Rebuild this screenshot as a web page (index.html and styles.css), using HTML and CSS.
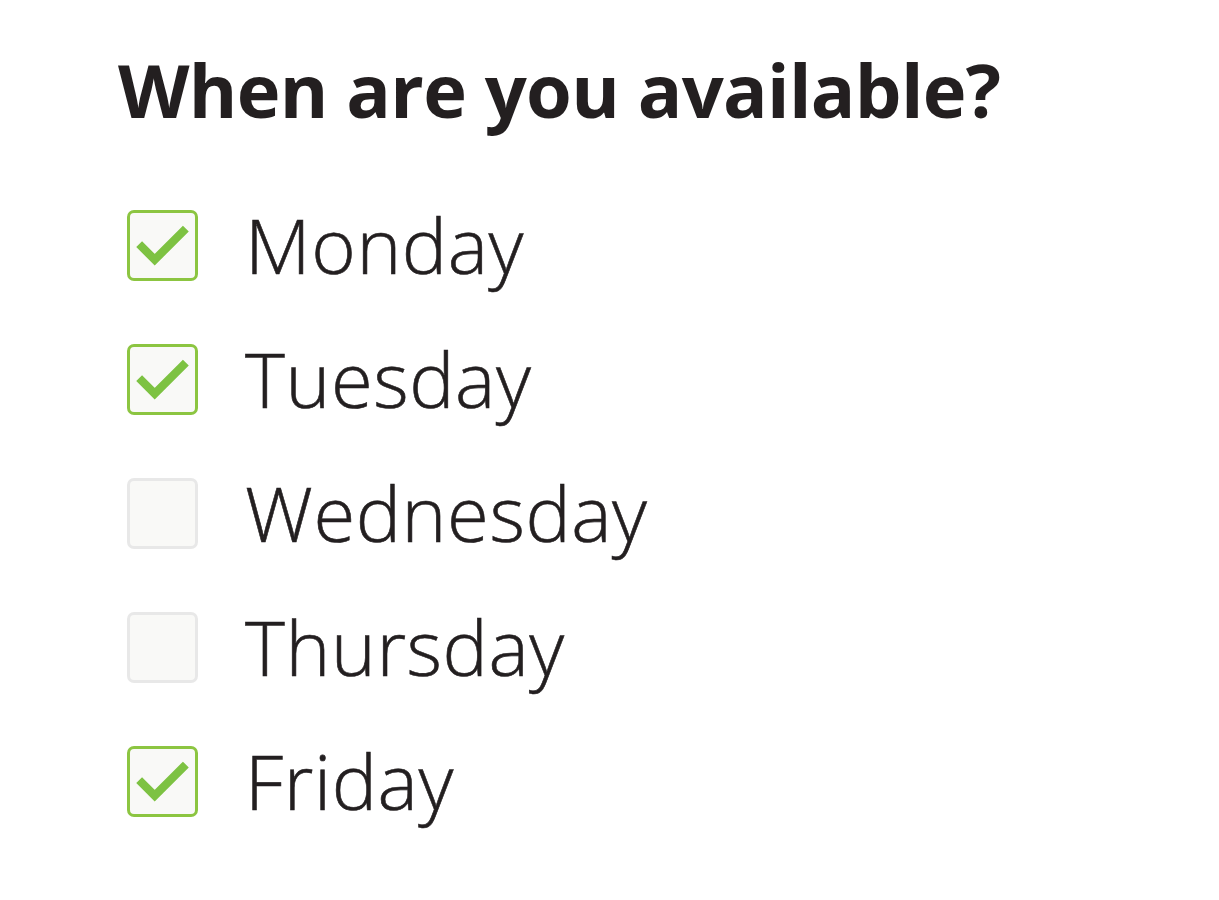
FILE: index.html
```html
<!DOCTYPE html>
<html>
<head>
<meta charset="utf-8">
<link rel="stylesheet" href="styles.css">
</head>
<body>
<main class="page">
  <h1 class="title">When are you available?</h1>
  <ul class="days">
    <li class="day"><span class="box checked"><svg viewBox="0 0 71 71" class="tick"><path d="M10 34 L27 51 L61 17"/></svg></span><span class="label">Monday</span></li>
    <li class="day"><span class="box checked"><svg viewBox="0 0 71 71" class="tick"><path d="M10 34 L27 51 L61 17"/></svg></span><span class="label">Tuesday</span></li>
    <li class="day"><span class="box"></span><span class="label">Wednesday</span></li>
    <li class="day"><span class="box"></span><span class="label">Thursday</span></li>
    <li class="day"><span class="box checked"><svg viewBox="0 0 71 71" class="tick"><path d="M10 34 L27 51 L61 17"/></svg></span><span class="label">Friday</span></li>
  </ul>
</main>
</body>
</html>
```
FILE: styles.css
```css
html, body { margin: 0; padding: 0; background: #fff; }
body { color: #231f20; font-family: "Open Sans", "Noto Sans", sans-serif; min-height: 900px; }
.page { padding: 40px 0 60px 118px; }
.title { margin: 0; font-size: 74px; font-weight: 700; line-height: 100px; letter-spacing: -0.7px; }
.days { list-style: none; margin: 0; padding: 0; margin-top: 70px; display: flex; flex-direction: column; gap: 64px; }
.day { display: flex; align-items: center; height: 70px; }
.box { box-sizing: border-box; width: 71px; height: 71px; margin-left: 9px; border: 3px solid #e8e8e8; border-radius: 7px; background: #f9f9f7; display: flex; flex: none; }
.box.checked { border-color: #8cc541; }
.tick { width: 65px; height: 65px; margin: 0; }
.tick path { fill: none; stroke: #7dc242; stroke-width: 9; stroke-linecap: butt; stroke-linejoin: miter; }
.label { margin-left: 47px; font-size: 76px; font-weight: 300; line-height: 70px; letter-spacing: 0.6px; -webkit-text-stroke: 0.6px #231f20; }
```
